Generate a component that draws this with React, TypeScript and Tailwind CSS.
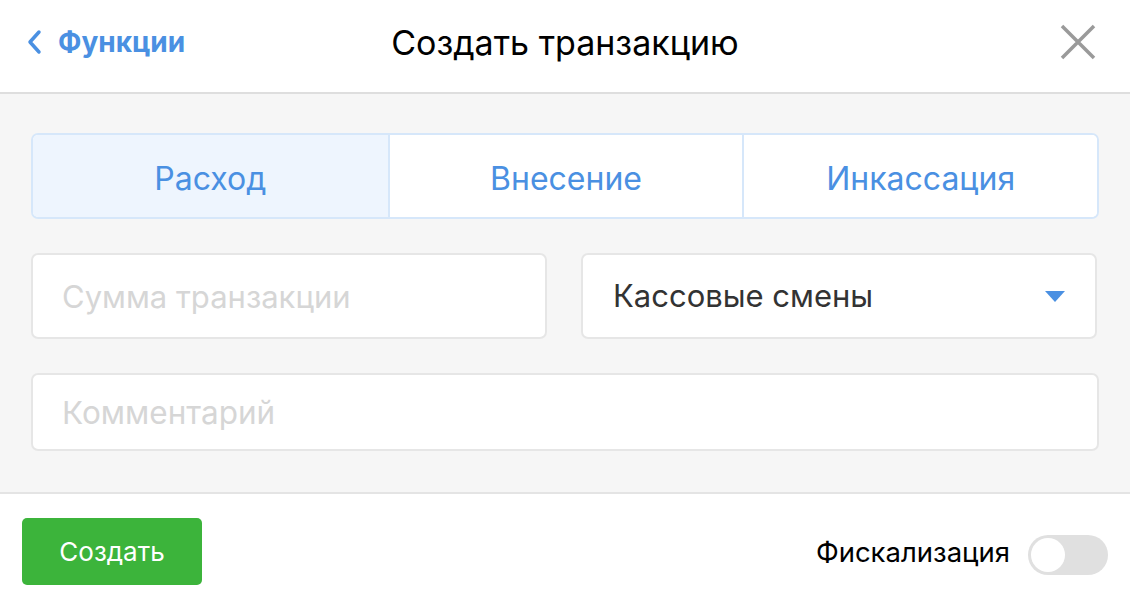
import { useState } from "react";

export default function App() {
    const [tab, setTab] = useState("expense");
    const [fiscal, setFiscal] = useState(false);

    const tabs = [
        { id: "expense", label: "Расход" },
        { id: "deposit", label: "Внесение" },
        { id: "collect", label: "Инкассация" },
    ];

    return (
        <div className="w-[1130px] h-[608px] flex flex-col bg-white font-['Inter',sans-serif] overflow-hidden">
            {/* Header */}
            <div className="h-[94px] shrink-0 flex items-center pl-[26px] pb-[8px] border-b-2 border-[#dedede] relative">
                <button className="flex items-center gap-[16px] text-[#4a90e2] font-bold text-[28px]">
                    <svg width="16" height="26" viewBox="0 0 16 26" fill="none">
                        <path d="M13 3 L4 13 L13 23" stroke="#4a90e2" strokeWidth="3.5" strokeLinecap="round" strokeLinejoin="round" />
                    </svg>
                    Функции
                </button>
                <div className="absolute left-0 right-0 top-0 h-[84px] flex items-center justify-center text-[34px] text-black pointer-events-none">
                    Создать транзакцию
                </div>
                <button className="ml-auto mr-[34px]">
                    <svg width="36" height="36" viewBox="0 0 36 36">
                        <path d="M2 2 L34 34 M34 2 L2 34" stroke="#9a9a9a" strokeWidth="3.5" />
                    </svg>
                </button>
            </div>

            {/* Body */}
            <div className="flex-1 bg-[#f6f6f6] px-[31px] pt-[39px] pb-[41px] flex flex-col gap-[34px] border-b-2 border-[#e4e4e4]">
                <div className="h-[86px] grid grid-cols-3 border-2 border-[#d6e7fa] rounded-[7px] overflow-hidden bg-white">
                    {tabs.map((t, i) => (
                        <button
                            key={t.id}
                            onClick={() => setTab(t.id)}
                            className={`text-[#4a90e2] text-[32px] pt-[6px] flex items-center justify-center ${i > 0 ? "border-l-2 border-[#d6e7fa]" : ""} ${tab === t.id ? "bg-[#eef5fe]" : "bg-white"}`}
                        >
                            {t.label}
                        </button>
                    ))}
                </div>

                <div className="grid grid-cols-2 gap-[34px] pr-[2px]">
                    <input
                        placeholder="Сумма транзакции"
                        className="h-[86px] bg-white border-2 border-[#e6e6e6] rounded-[7px] px-[29px] text-[31px] text-[#333] placeholder:text-[#d6d6d6] outline-none"
                    />
                    <div className="h-[86px] bg-white border-2 border-[#e6e6e6] rounded-[7px] pl-[30px] pr-[30px] flex items-center justify-between">
                        <span className="text-[31px] text-[#333]">Кассовые смены</span>
                        <svg width="20" height="11" viewBox="0 0 20 11">
                            <path d="M0 0 H20 L10 11 Z" fill="#4a90e2" />
                        </svg>
                    </div>
                </div>

                <input
                    placeholder="Комментарий"
                    className="h-[78px] bg-white border-2 border-[#e6e6e6] rounded-[7px] px-[29px] text-[31.5px] text-[#333] placeholder:text-[#d6d6d6] outline-none"
                />
            </div>

            {/* Footer */}
            <div className="h-[114px] shrink-0 flex items-center justify-between pl-[22px] pr-[22px]">
                <button className="w-[180px] h-[67px] rounded-[5px] bg-[#3cb43b] text-white text-[26px]">
                    Создать
                </button>
                <div className="flex items-center gap-[18px] mt-[8px]">
                    <span className="text-[27.5px] text-black -mt-[4px]">Фискализация</span>
                    <button
                        onClick={() => setFiscal(!fiscal)}
                        className={`w-[80px] h-[40px] rounded-full p-[3px] flex ${fiscal ? "bg-[#3cb43b] justify-end" : "bg-[#e0e0e0] justify-start"}`}
                    >
                        <span className="w-[34px] h-[34px] rounded-full bg-white block" />
                    </button>
                </div>
            </div>
        </div>
    );
}
